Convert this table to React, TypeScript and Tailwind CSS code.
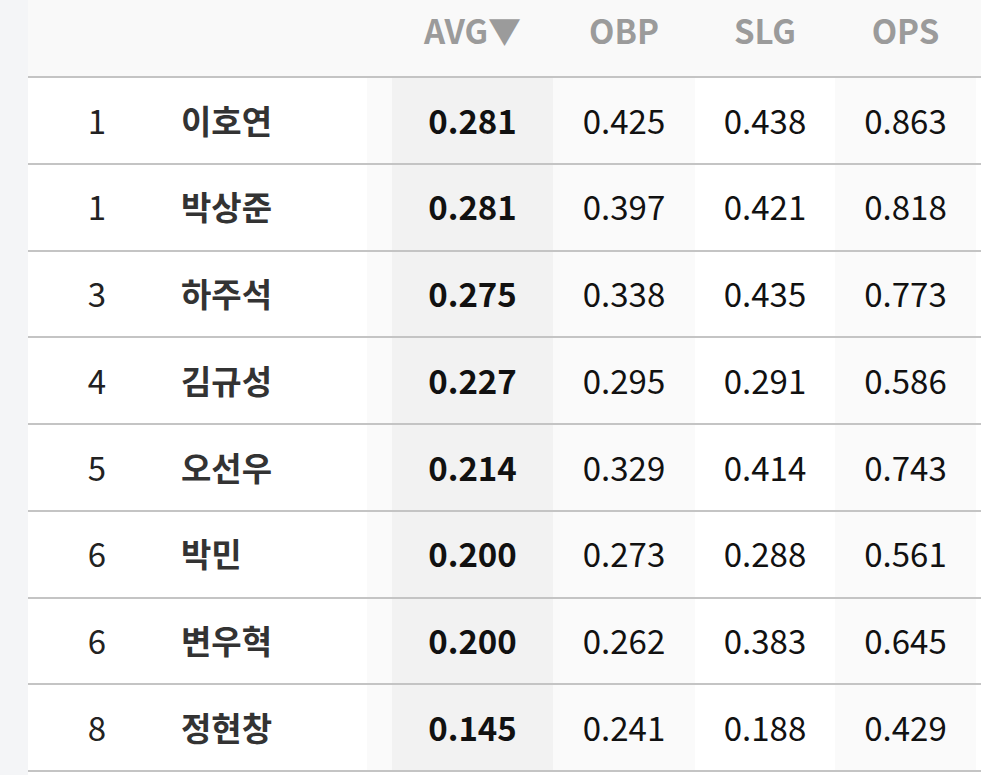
import React from "react";

const rows = [
  ["1", "이호연", "0.281", "0.425", "0.438", "0.863"],
  ["1", "박상준", "0.281", "0.397", "0.421", "0.818"],
  ["3", "하주석", "0.275", "0.338", "0.435", "0.773"],
  ["4", "김규성", "0.227", "0.295", "0.291", "0.586"],
  ["5", "오선우", "0.214", "0.329", "0.414", "0.743"],
  ["6", "박민", "0.200", "0.273", "0.288", "0.561"],
  ["6", "변우혁", "0.200", "0.262", "0.383", "0.645"],
  ["8", "정현창", "0.145", "0.241", "0.188", "0.429"],
];

const cols = "grid grid-cols-[138px_201px_25px_161px_142px_140px_141px_1fr]";

export default function App() {
  return (
    <div
      className="flex w-[981px] h-[775px] bg-white overflow-hidden"
      style={{ fontFamily: '"Noto Sans CJK KR", "Noto Sans", sans-serif' }}
    >
      <div className="w-[28px] shrink-0 bg-[#f4f5f7]" />
      <div className="flex-1 flex flex-col">
        <div className={`${cols} h-[78px] bg-[#f9f9f9] border-b-2 border-[#c4c4c4] text-[33px] font-bold text-[#9b9b9b]`}>
          <div />
          <div />
          <div />
          <div className="flex items-center justify-center pb-[14px]">AVG▼</div>
          <div className="flex items-center justify-center pb-[14px]">OBP</div>
          <div className="flex items-center justify-center pb-[14px]">SLG</div>
          <div className="flex items-center justify-center pb-[14px]">OPS</div>
          <div />
        </div>
        {rows.map((r, i) => (
          <div key={i} className={`${cols} h-[86.75px] border-b-2 border-[#c4c4c4] text-[33px]`}>
            <div className="flex items-center justify-center bg-white text-[#222]">{r[0]}</div>
            <div className="flex items-center pl-[15px] bg-white font-bold text-[#333]">{r[1]}</div>
            <div className="bg-[#fafafa]" />
            <div className="flex items-center justify-center bg-[#f2f2f2] font-bold text-[#111]">{r[2]}</div>
            <div className="flex items-center justify-center bg-[#fafafa] text-[#111]">{r[3]}</div>
            <div className="flex items-center justify-center bg-white text-[#111]">{r[4]}</div>
            <div className="flex items-center justify-center bg-[#fafafa] text-[#111]">{r[5]}</div>
            <div className="bg-white" />
          </div>
        ))}
      </div>
    </div>
  );
}
